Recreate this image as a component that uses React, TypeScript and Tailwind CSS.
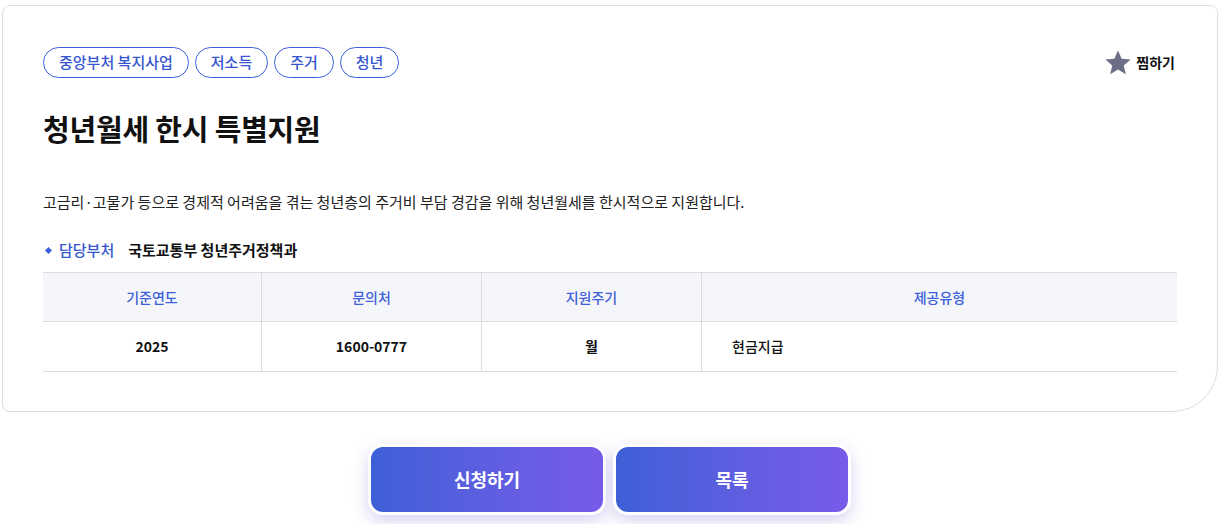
import React from 'react';

const tags = ['중앙부처 복지사업', '저소득', '주거', '청년'];

const rows = [
  { label: '기준연도', value: '2025' },
  { label: '문의처', value: '1600-0777' },
  { label: '지원주기', value: '월' },
];

export default function App() {
  return (
    <div className="w-[1221px] h-[524px] bg-white overflow-hidden" style={{ fontFamily: '"Noto Sans CJK KR", "Noto Sans", sans-serif' }}>
      <div className="ml-[2px] mt-[5px] w-[1216px] h-[407px] border border-[#dedede] rounded-tl-[8px] rounded-tr-[8px] rounded-bl-[8px] rounded-br-[46px] pl-[40px] pr-[40px] pt-[41px]">
        <div className="flex items-center justify-between">
          <div className="flex gap-[6px]">
            {tags.map((t) => (
              <span key={t} className="h-[31px] px-[15px] flex items-center rounded-full border-[1.5px] border-[#3d5fd9] text-[#3556cf] text-[15px] font-medium">
                {t}
              </span>
            ))}
          </div>
          <button className="flex items-center gap-[4px] text-[14px] font-bold text-[#111] mr-[2px]">
            <svg width="28" height="27" viewBox="0 0 24 24" fill="#6b6e85">
              <path d="M12 1.2l3.2 7.4 8 .7-6.1 5.3 1.9 7.9L12 18.3l-7 4.2 1.9-7.9-6.1-5.3 8-.7z" />
            </svg>
            찜하기
          </button>
        </div>

        <h1 className="mt-[30px] text-[29px] leading-[40px] font-bold text-[#111] tracking-[-0.2px]">청년월세 한시 특별지원</h1>

        <p className="mt-[43px] text-[15px] leading-[22px] text-[#222]">
          고금리·고물가 등으로 경제적 어려움을 겪는 청년층의 주거비 부담 경감을 위해 청년월세를 한시적으로 지원합니다.
        </p>

        <div className="mt-[26px] flex items-center text-[15px] leading-[22px]">
          <span className="w-[5px] h-[5px] bg-[#3d5fd9] rotate-45 ml-[3px] mr-[8px]" />
          <span className="text-[#3556cf] font-medium">담당부처</span>
          <span className="ml-[14px] font-bold text-[#111]">국토교통부 청년주거정책과</span>
        </div>

        <div className="mt-[11px] w-[1134px] border-t border-b border-[#dcdcdc]">
          <div className="grid grid-cols-[219px_220px_220px_1fr] bg-[#f5f6fa] border-b border-[#dcdcdc] h-[49px] text-[14px] font-medium text-[#3d5fd9]">
            {rows.map((r) => (
              <div key={r.label} className="flex items-center justify-center border-r border-[#dcdcdc]">{r.label}</div>
            ))}
            <div className="flex items-center justify-center">제공유형</div>
          </div>
          <div className="grid grid-cols-[219px_220px_220px_1fr] h-[49px] text-[14px] font-bold text-[#111]">
            {rows.map((r) => (
              <div key={r.label} className="flex items-center justify-center border-r border-[#dcdcdc]">{r.value}</div>
            ))}
            <div className="flex items-center pl-[30px] font-medium">현금지급</div>
          </div>
        </div>
      </div>

      <div className="mt-[32px] flex justify-center gap-[7px] pr-[2px]">
        {['신청하기', '목록'].map((b) => (
          <button
            key={b}
            className="w-[238px] h-[71px] rounded-[15px] border-[3px] border-white bg-gradient-to-r from-[#3d60d6] to-[#775be9] text-white text-[18px] font-bold shadow-[0_6px_16px_rgba(90,80,200,0.25)]"
          >
            {b}
          </button>
        ))}
      </div>
    </div>
  );
}
